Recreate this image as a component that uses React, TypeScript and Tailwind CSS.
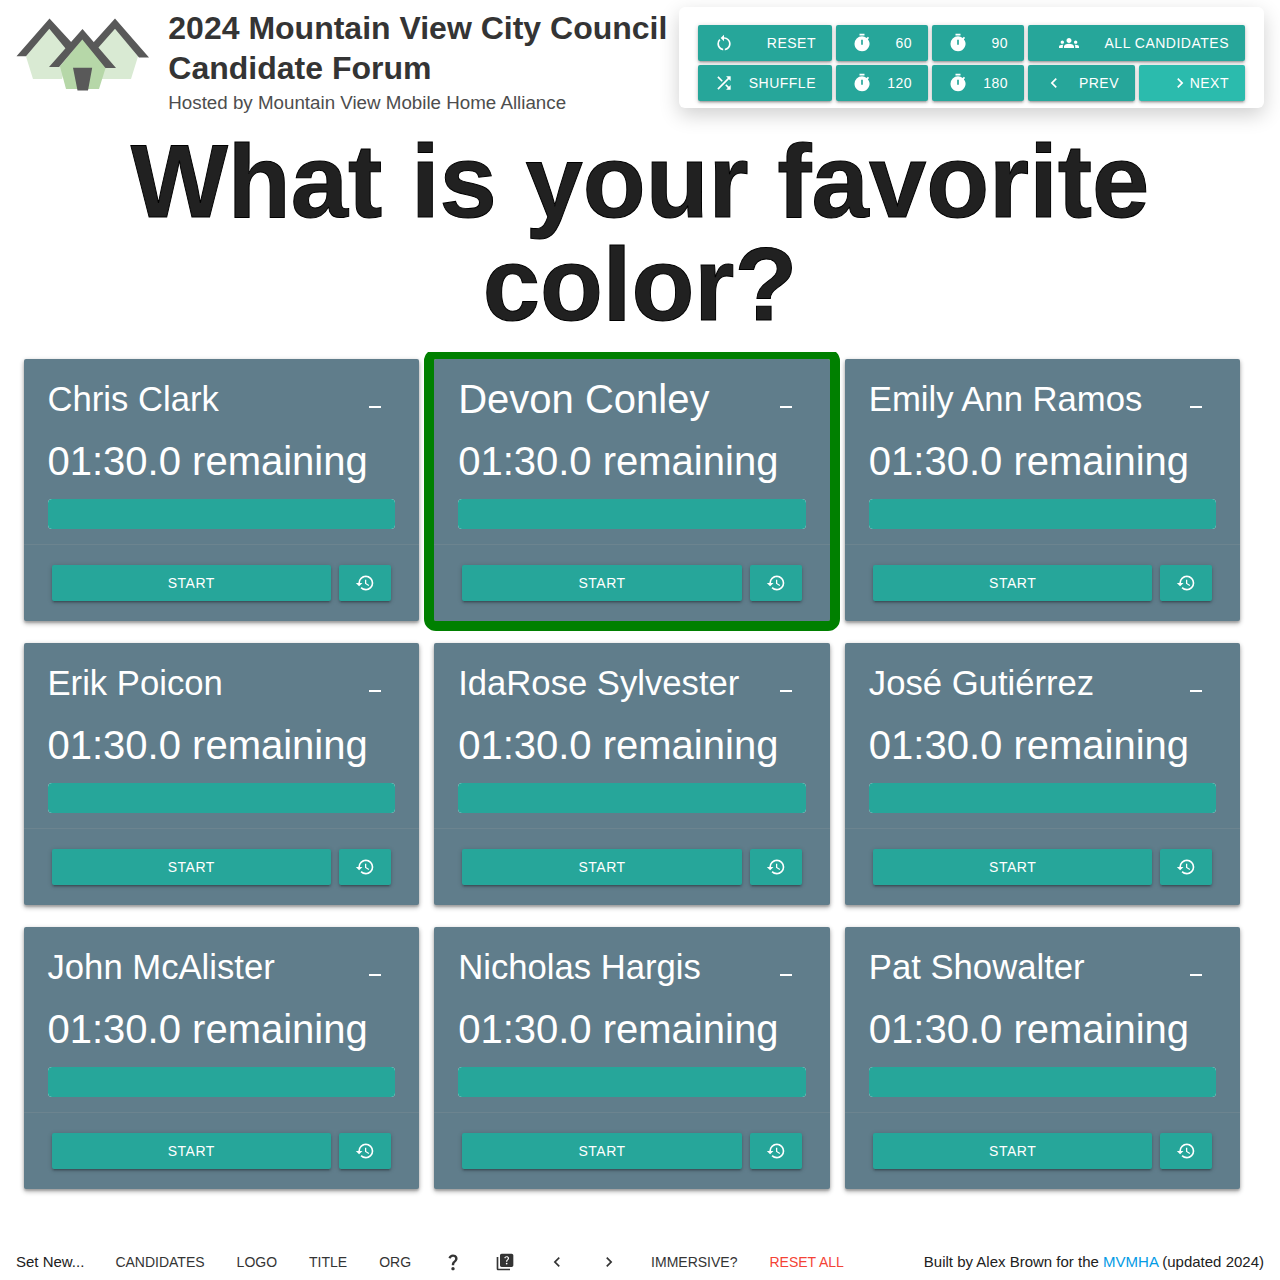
import React from 'react';
import {
  MdRestartAlt,
  MdShuffle,
  MdTimer,
  MdGroups,
  MdChevronLeft,
  MdChevronRight,
  MdHistory,
  MdQuestionMark,
  MdQuiz,
  MdMinimize,
} from 'react-icons/md';

const candidates = [
  'Chris Clark',
  'Devon Conley',
  'Emily Ann Ramos',
  'Erik Poicon',
  'IdaRose Sylvester',
  'José Gutiérrez',
  'John McAlister',
  'Nicholas Hargis',
  'Pat Showalter',
];

const raised =
  'shadow-[0_2px_2px_0_rgba(0,0,0,0.14),0_3px_1px_-2px_rgba(0,0,0,0.12),0_1px_5px_0_rgba(0,0,0,0.2)]';

const cardShadow = 'shadow-[0_2px_2px_0_rgba(0,0,0,0.16),0_3px_5px_0_rgba(0,0,0,0.2),0_1px_5px_0_rgba(0,0,0,0.16)]';

const button = `flex h-9 items-center rounded-[2px] text-[14px] tracking-[0.5px] text-white ${raised}`;

function Logo() {
  return (
    <svg viewBox="16 18 134 73" className="mt-[18px] h-[73px] w-[134px] shrink-0">
      <path fill="#d9ead3" d="M26 56.5 49.5 27 70 52l-8 27H33zM138 56.5 115 27 94 52l8 27h29z" />
      <path fill="#595959" d="M16.5 56.2 49.5 18.5 72 43l-6 6-16.7-20.3L26 56.2zM93 43l22-24.5 34 39h-10L115 28.7 98 48z" />
      <path fill="#b6d7a8" d="M60 66.5 82.5 38.5 106 66.5 99 89H66z" />
      <path fill="#595959" d="M49 67 82.5 29 116 68h-10.5L82.3 39.5 59 67zM73 67.700h19.200L88 90.600H77.500z" />
    </svg>
  );
}

interface ControlProps {
  icon: React.ReactNode;
  label: string;
  className?: string;
}

function Control({ icon, label, className = 'bg-[#26a69a] justify-between px-4' }: ControlProps) {
  return (
    <button className={`${button} ${className}`}>
      {icon}
      <span>{label}</span>
    </button>
  );
}

function Controls() {
  return (
    <div className="ml-auto mt-[7px] grid h-[101px] w-[585px] shrink-0 grid-cols-[134px_92px_92px_217px] content-start gap-1 rounded-[6px] bg-white pl-[19px] pt-[18px] shadow-[0_7px_20px_0_rgba(0,0,0,0.19)]">
      <Control icon={<MdRestartAlt size={20} />} label="RESET" />
      <Control icon={<MdTimer size={20} />} label="60" />
      <Control icon={<MdTimer size={20} />} label="90" />
      <Control icon={<MdGroups size={20} />} label="ALL CANDIDATES" className="justify-between bg-[#26a69a] pl-[31px] pr-4" />
      <Control icon={<MdShuffle size={20} />} label="SHUFFLE" />
      <Control icon={<MdTimer size={20} />} label="120" />
      <Control icon={<MdTimer size={20} />} label="180" />
      <div className="flex gap-1">
        <Control icon={<MdChevronLeft size={20} />} label="PREV" className="w-[107px] justify-between bg-[#26a69a] px-4" />
        <Control icon={<MdChevronRight size={20} />} label="NEXT" className="w-[106px] justify-end bg-[#2bbbad] pr-4" />
      </div>
    </div>
  );
}

function CandidateCard({ name, active }: { name: string; active: boolean }) {
  return (
    <article
      className={`h-[262px] rounded-[2px] bg-[#607d8b] text-white ${cardShadow} ${
        active ? 'z-10 outline-[10px] outline-solid outline-[#008000]' : ''
      }`}
    >
      <div className="h-[185px] px-6 pt-5">
        <div className="flex h-10 items-center justify-between">
          <h2 className={`whitespace-nowrap leading-10 ${active ? 'text-[40px]' : 'text-[34.67px]'}`}>{name}</h2>
          <MdMinimize size={24} className="mr-[8px] shrink-0" />
        </div>
        <p className="mt-[22px] whitespace-nowrap text-[40px] leading-10">01:30.0 remaining</p>
        <div className="mt-[18px] h-[30px] overflow-hidden rounded-[4px] bg-[#acece6]">
          <div className="h-full w-full rounded-[4px] bg-[#26a69a]" />
        </div>
      </div>
      <div className="flex gap-2 border-t border-[#a0a0a0]/20 px-7 pt-5">
        <button className={`${button} flex-1 justify-center bg-[#26a69a]`}>START</button>
        <button className={`${button} w-[52px] justify-center bg-[#26a69a]`} aria-label="Restore time">
          <MdHistory size={20} />
        </button>
      </div>
    </article>
  );
}

function FooterButton({ children, className = '' }: { children: React.ReactNode; className?: string }) {
  return <button className={`flex h-9 items-center px-4 text-[14px] ${className}`}>{children}</button>;
}

export default function App() {
  return (
    <div className="flex h-[1280px] w-[1280px] flex-col overflow-hidden bg-white font-['Liberation_Sans',Arial,sans-serif] text-[15px] text-[#212121]">
      <header className="flex h-[126px] shrink-0 items-start px-4">
        <Logo />
        <div className="ml-[18.3px] mt-2 whitespace-nowrap">
          <h1 className="text-[32px] font-bold leading-10 text-[#343434]">
            2024 Mountain View City Council
            <br />
            Candidate Forum
          </h1>
          <p className="mt-0.5 text-[18.75px] leading-[26px] text-[#4d4d4d]">Hosted by Mountain View Mobile Home Alliance</p>
        </div>
        <Controls />
      </header>

      <section className="h-[226px] shrink-0 pt-1 text-center text-[103px] font-bold leading-[103px] [-webkit-text-stroke:1px_black]">
        What is your favorite
        <br />
        color?
      </section>

      <main className="grid h-[878px] shrink-0 grid-cols-3 content-start gap-x-[15px] gap-y-[22px] overflow-hidden pl-[23.5px] pr-[39.5px] pt-[7px]">
        {candidates.map((name, i) => (
          <CandidateCard key={name} name={name} active={i === 1} />
        ))}
      </main>

      <footer className="mt-[14px] flex h-9 shrink-0 items-center px-4">
        <span className="w-[83.4px]">Set New...</span>
        <div className="flex text-[#343434]">
          <FooterButton>CANDIDATES</FooterButton>
          <FooterButton>LOGO</FooterButton>
          <FooterButton>TITLE</FooterButton>
          <FooterButton>ORG</FooterButton>
          <FooterButton><MdQuestionMark size={20} /></FooterButton>
          <FooterButton><MdQuiz size={20} /></FooterButton>
          <FooterButton><MdChevronLeft size={20} /></FooterButton>
          <FooterButton><MdChevronRight size={20} /></FooterButton>
          <FooterButton>IMMERSIVE?</FooterButton>
          <FooterButton className="text-[#f44336]">RESET ALL</FooterButton>
        </div>
        <p className="ml-auto">
          Built by Alex Brown for the <a className="text-[#039be5]">MVMHA</a> (updated 2024)
        </p>
      </footer>
    </div>
  );
}
